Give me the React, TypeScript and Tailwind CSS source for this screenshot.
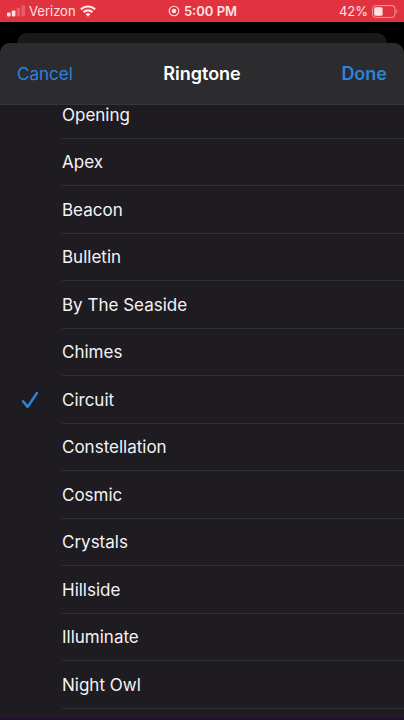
import React, { useState } from 'react';

const ringtones = [
  'Opening',
  'Apex',
  'Beacon',
  'Bulletin',
  'By The Seaside',
  'Chimes',
  'Circuit',
  'Constellation',
  'Cosmic',
  'Crystals',
  'Hillside',
  'Illuminate',
  'Night Owl',
];

const SignalIcon = () => (
  <svg viewBox="0 0 18 12" className="h-3 w-[18px]" fill="currentColor" aria-hidden="true">
    <rect x="0" y="7.4" width="3.6" height="4" rx="0.8" />
    <rect x="4.8" y="5.4" width="3.6" height="6" rx="0.8" />
    <rect x="9.6" y="2.8" width="3.6" height="8.6" rx="0.8" opacity="0.25" />
    <rect x="14.4" y="0.2" width="3.6" height="11.2" rx="0.8" opacity="0.25" />
  </svg>
);

const WifiIcon = () => (
  <svg viewBox="0 0 16 12" className="h-3 w-4" fill="none" stroke="currentColor" strokeWidth="2.2" aria-hidden="true">
    <path d="M0.9 4.4a10.2 10.2 0 0 1 14.2 0" />
    <path d="M3.5 7.2a6.4 6.4 0 0 1 9 0" />
    <path d="M8 11.8 5.6 9.3a3.4 3.4 0 0 1 4.8 0Z" fill="currentColor" stroke="none" />
  </svg>
);

const RecordIcon = () => (
  <svg viewBox="0 0 12 12" className="size-3" fill="none" aria-hidden="true">
    <circle cx="6" cy="6" r="4.8" stroke="currentColor" strokeWidth="1.1" />
    <circle cx="6" cy="6" r="2.3" fill="currentColor" />
  </svg>
);

const BatteryIcon = () => (
  <svg viewBox="0 0 26 13" className="h-[13px] w-[26px]" fill="none" aria-hidden="true">
    <rect x="0.6" y="0.6" width="22.4" height="11.8" rx="3.2" stroke="currentColor" strokeWidth="1" opacity="0.6" />
    <rect x="2.2" y="2.2" width="8.4" height="8.6" rx="1.6" fill="currentColor" />
    <path d="M24.4 4.6v3.8c1.3-.5 1.3-3.3 0-3.8Z" fill="currentColor" opacity="0.6" />
  </svg>
);

const CheckIcon = () => (
  <svg viewBox="0 0 18 18" className="size-[18px]" fill="none" aria-hidden="true">
    <path d="M2 10.2 6.7 15.9 15.9 2" stroke="currentColor" strokeWidth="2.5" strokeLinecap="round" strokeLinejoin="round" />
  </svg>
);

const StatusBar = () => (
  <div className="grid h-[22px] shrink-0 grid-cols-[1fr_auto_1fr] items-center bg-[#e0323f] pl-[7px] pr-[6px] text-[13px] leading-4 text-[#ffe3e3]">
    <div className="flex items-center gap-1">
      <SignalIcon />
      <span>Verizon</span>
      <WifiIcon />
    </div>
    <div className="flex items-center gap-1">
      <RecordIcon />
      <span className="font-semibold">5:00 PM</span>
    </div>
    <div className="flex items-center justify-end gap-1">
      <span>42%</span>
      <BatteryIcon />
    </div>
  </div>
);

const App = () => {
  const [selected, setSelected] = useState('Circuit');

  return (
    <div className="flex h-screen flex-col overflow-hidden bg-black font-['Inter',sans-serif]">
      <StatusBar />
      <div className="mx-[17px] mt-[11px] h-[10px] shrink-0 rounded-t-[10px] bg-[#19181b]" />

      <main className="flex min-h-0 flex-1 flex-col overflow-hidden rounded-t-[10px] bg-[#1e1c21]">
        <header className="relative z-10 grid h-[62px] shrink-0 grid-cols-[1fr_auto_1fr] items-center border-b border-[#363538] bg-[#2c2b2d] px-[17px] text-lg">
          <button type="button" className="justify-self-start text-[#2c83d8]">
            <span className="text-[17px]">Cancel</span>
          </button>
          <h1 className="font-semibold text-white">Ringtone</h1>
          <button type="button" className="justify-self-end font-semibold text-[#2c83d8]">
            Done
          </button>
        </header>

        {/* the first row is scrolled partly under the header */}
        <ul className="-mt-[14px]">
          {ringtones.map((name) => (
            <li key={name} className="odd:h-12 even:h-[47px]">
              <label className="flex h-full cursor-pointer">
                <input
                  type="radio"
                  name="ringtone"
                  value={name}
                  checked={selected === name}
                  onChange={() => setSelected(name)}
                  className="sr-only"
                />
                <span className="flex w-[62px] items-center pl-[21px] text-[#2c83d8]">
                  {selected === name && <CheckIcon />}
                </span>
                <span className="flex flex-1 items-center border-b border-[#302f34] pt-0.5 text-[17px] text-[#f4f3f5]">
                  {name}
                </span>
              </label>
            </li>
          ))}
        </ul>
      </main>
      <div className="h-[2px] shrink-0 bg-[#230f2b]" />
    </div>
  );
};

export default App;
